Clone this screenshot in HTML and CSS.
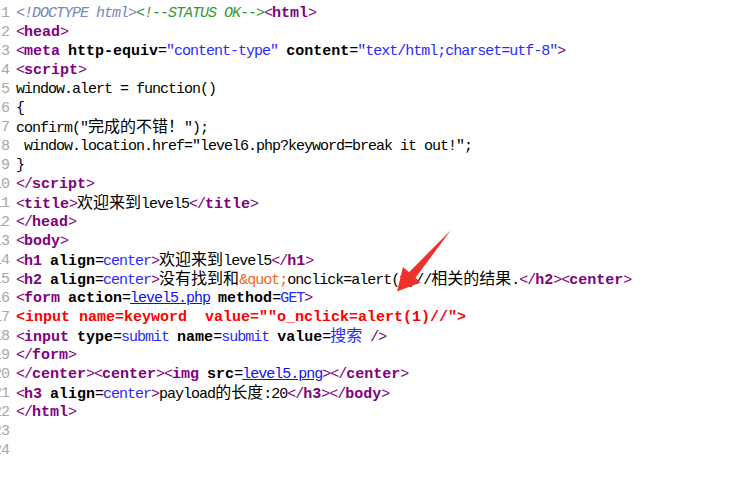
FILE: index.html
```html
<!DOCTYPE html>
<html>
<head>
<meta charset="utf-8">
<link rel="stylesheet" href="styles.css">
</head>
<body>
<div class="view">
<div class="row"><span class="ln">1</span><span class="code"><span class="dt">&lt;!DOCTYPE html&gt;</span><span class="cm">&lt;!--STATUS OK--&gt;</span><span class="b">&lt;</span><span class="t">html</span><span class="b">&gt;</span></span></div>
<div class="row"><span class="ln">2</span><span class="code"><span class="b">&lt;</span><span class="t">head</span><span class="b">&gt;</span></span></div>
<div class="row"><span class="ln">3</span><span class="code"><span class="b">&lt;</span><span class="t">meta</span> <span class="a">http-equiv</span>=<span class="v">"content-type"</span> <span class="a">content</span>=<span class="v">"text/html;charset=utf-8"</span><span class="b">&gt;</span></span></div>
<div class="row"><span class="ln">4</span><span class="code"><span class="b">&lt;</span><span class="t">script</span><span class="b">&gt;</span></span></div>
<div class="row"><span class="ln">5</span><span class="code">window.alert = function()</span></div>
<div class="row"><span class="ln">6</span><span class="code">{</span></div>
<div class="row"><span class="ln">7</span><span class="code">confirm("<span class="zh">完成的不错！</span>");</span></div>
<div class="row"><span class="ln">8</span><span class="code"> window.location.href="level6.php?keyword=break it out!";</span></div>
<div class="row"><span class="ln">9</span><span class="code">}</span></div>
<div class="row"><span class="ln">10</span><span class="code"><span class="b">&lt;/</span><span class="t">script</span><span class="b">&gt;</span></span></div>
<div class="row"><span class="ln">11</span><span class="code"><span class="b">&lt;</span><span class="t">title</span><span class="b">&gt;</span><span class="zh">欢迎来到</span>level5<span class="b">&lt;/</span><span class="t">title</span><span class="b">&gt;</span></span></div>
<div class="row"><span class="ln">12</span><span class="code"><span class="b">&lt;/</span><span class="t">head</span><span class="b">&gt;</span></span></div>
<div class="row"><span class="ln">13</span><span class="code"><span class="b">&lt;</span><span class="t">body</span><span class="b">&gt;</span></span></div>
<div class="row"><span class="ln">14</span><span class="code"><span class="b">&lt;</span><span class="t">h1</span> <span class="a">align</span>=<span class="v">center</span><span class="b">&gt;</span><span class="zh">欢迎来到</span>level5<span class="b">&lt;/</span><span class="t">h1</span><span class="b">&gt;</span></span></div>
<div class="row"><span class="ln">15</span><span class="code"><span class="b">&lt;</span><span class="t">h2</span> <span class="a">align</span>=<span class="v">center</span><span class="b">&gt;</span><span class="zh">没有找到和</span><span class="en">&amp;quot;</span>onclick=alert(1)//<span class="zh">相关的结果</span>.<span class="b">&lt;/</span><span class="t">h2</span><span class="b">&gt;&lt;</span><span class="t">center</span><span class="b">&gt;</span></span></div>
<div class="row"><span class="ln">16</span><span class="code"><span class="b">&lt;</span><span class="t">form</span> <span class="a">action</span>=<span class="lk">level5.php</span> <span class="a">method</span>=<span class="v">GET</span><span class="b">&gt;</span></span></div>
<div class="row"><span class="ln">17</span><span class="code"><span class="red">&lt;input name=keyword  value=""o_nclick=alert(1)//"&gt;</span></span></div>
<div class="row"><span class="ln">18</span><span class="code"><span class="b">&lt;</span><span class="t">input</span> <span class="a">type</span>=<span class="v">submit</span> <span class="a">name</span>=<span class="v">submit</span> <span class="a">value</span>=<span class="v zh">搜索</span> <span class="b">/&gt;</span></span></div>
<div class="row"><span class="ln">19</span><span class="code"><span class="b">&lt;/</span><span class="t">form</span><span class="b">&gt;</span></span></div>
<div class="row"><span class="ln">20</span><span class="code"><span class="b">&lt;/</span><span class="t">center</span><span class="b">&gt;&lt;</span><span class="t">center</span><span class="b">&gt;&lt;</span><span class="t">img</span> <span class="a">src</span>=<span class="lk">level5.png</span><span class="b">&gt;&lt;/</span><span class="t">center</span><span class="b">&gt;</span></span></div>
<div class="row"><span class="ln">21</span><span class="code"><span class="b">&lt;</span><span class="t">h3</span> <span class="a">align</span>=<span class="v">center</span><span class="b">&gt;</span>payload<span class="zh">的长度</span>:20<span class="b">&lt;/</span><span class="t">h3</span><span class="b">&gt;&lt;/</span><span class="t">body</span><span class="b">&gt;</span></span></div>
<div class="row"><span class="ln">22</span><span class="code"><span class="b">&lt;/</span><span class="t">html</span><span class="b">&gt;</span></span></div>
<div class="row"><span class="ln">23</span><span class="code"></span></div>
<div class="row"><span class="ln">24</span><span class="code"></span></div>
</div>
<svg class="arrow" width="732" height="487" viewBox="0 0 732 487">
<polygon points="451,230 415.5,277.8 420.5,282.6 397,291.5 403,267 409,272.2" fill="#f0302c"/>
</svg>
</body>
</html>
```
FILE: styles.css
```css
html, body {
  margin: 0;
  padding: 0;
  background: #ffffff;
}
body {
  width: 732px;
  height: 487px;
  overflow: hidden;
  position: relative;
}
.view {
  margin-left: -15px;
  padding-top: 4px;
  font-family: "Liberation Mono", monospace;
  font-size: 15px;
  letter-spacing: -1px;
  color: #000000;
}
.row {
  display: flex;
  height: 19px;
  line-height: 19px;
  white-space: pre;
}
.ln {
  width: 24px;
  flex: none;
  text-align: right;
  color: #a8a8a8;
  margin-right: 7px;
}
.code {
  flex: 1;
}
.b { color: #800080; }
.t { color: #800080; font-weight: bold; letter-spacing: 0; }
.a { font-weight: bold; letter-spacing: 0; }
.v { color: #2a2aff; }
.dt { color: #7886b8; font-style: italic; }
.cm { color: #2f9a2f; font-style: italic; }
.en { color: #f06a1a; }
.lk { color: #1010ee; text-decoration: underline; }
.red { color: #ff0000; font-weight: bold; letter-spacing: 0; }
.zh {
  font-family: "Noto Sans CJK SC", sans-serif;
  font-size: 16px;
  line-height: 14px;
  letter-spacing: 0;
}
.arrow {
  position: absolute;
  left: 0;
  top: 0;
  pointer-events: none;
}
```
